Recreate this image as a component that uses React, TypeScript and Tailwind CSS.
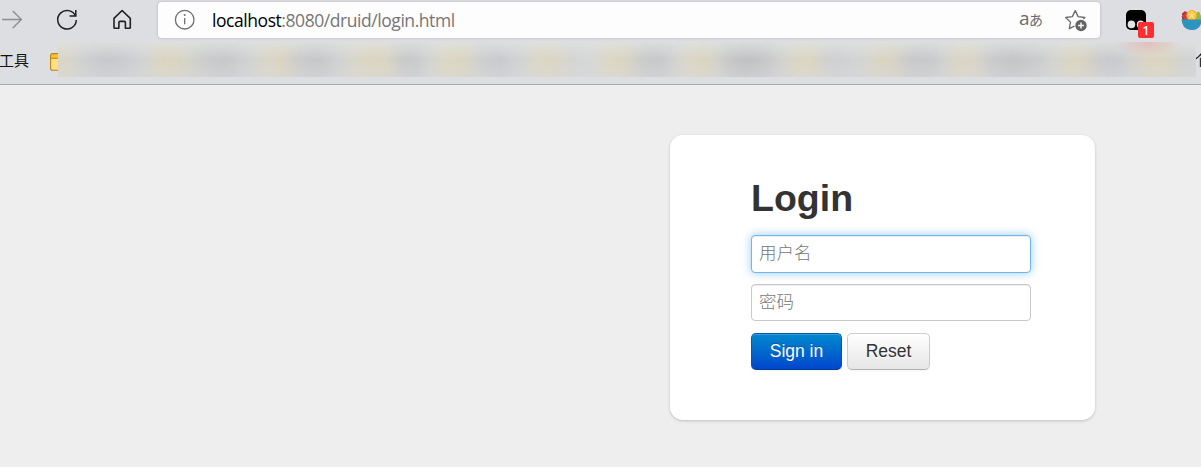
import React from "react";

const bookmarkBlurStops: [number, string][] = [
  [58, "#dad5c4"], [66, "#dad6c8"], [84, "#cfd0d1"], [104, "#c6c8cb"], [122, "#c9cbcf"], [142, "#d1d2d4"],
  [158, "#dad6c4"], [171, "#dbd5be"], [186, "#d6d4c8"], [204, "#cbcccd"], [226, "#c5c7c9"], [246, "#cfd1d3"],
  [262, "#d8d6cc"], [280, "#dbd5be"], [296, "#cdcdca"], [318, "#c4c6c9"], [340, "#d1d2d3"], [356, "#dad7c9"],
  [373, "#dbd5be"], [388, "#dad5c4"], [398, "#cbccc9"], [412, "#c6c8ca"], [430, "#d3d4d2"], [444, "#dcd8c4"],
  [456, "#dcd6be"], [468, "#d8d5c5"], [482, "#cdced0"], [500, "#c8cace"], [518, "#d0d2d4"], [534, "#dad7c9"],
  [548, "#dcd6c0"], [562, "#d8d6ca"], [576, "#d3d4d5"], [592, "#d6d7d7"], [606, "#dbd7c8"], [618, "#dcd6c0"],
  [630, "#d6d3c5"], [642, "#cacbcb"], [658, "#c5c7c9"], [674, "#d1d2d2"], [688, "#dbd7c8"], [702, "#dbd5be"],
  [714, "#d6d4c8"], [728, "#c7c8c8"], [746, "#bfc0c2"], [766, "#c6c7c9"], [782, "#d2d2d0"], [798, "#dcd6c2"],
  [812, "#dbd6c2"], [826, "#d0d1d0"], [842, "#ced0d2"], [858, "#d2d3d5"], [872, "#d9d6c9"], [886, "#dad4bf"],
  [898, "#d3d1c7"], [914, "#c6c8ca"], [932, "#c7c9cc"], [944, "#d2d2cf"], [962, "#dcd6c2"], [978, "#d6d4c8"],
  [992, "#c9cacd"], [1014, "#c2c4c6"], [1036, "#c9cbcd"], [1056, "#d5d4cf"], [1070, "#dad5c1"], [1082, "#dad5c1"],
  [1098, "#cbccca"], [1114, "#c7c9ce"], [1128, "#cfd0d1"], [1144, "#dad4c4"], [1158, "#dcd5bd"], [1172, "#d8d4c5"],
  [1184, "#d0d2d1"], [1196, "#d1d4d5"],
];

const bookmarkGradient = `linear-gradient(90deg, ${bookmarkBlurStops
  .map(([x, color]) => `${color} ${x - 38}px`)
  .join(", ")})`;

function Toolbar() {
  return (
    <div className="flex h-[39px] items-start">
      <svg className="mt-[10px] h-5 w-6 shrink-0" viewBox="0 0 24 20" fill="none" stroke="#8d8e91" strokeWidth="1.4">
        <path d="M2 9.5h19.3M12.8 1l8.6 8.5-8.6 8.5" />
      </svg>
      <svg className="mt-[8px] ml-[31px] h-6 w-6 shrink-0" viewBox="0 0 24 24" fill="none" stroke="#202124" strokeWidth="1.5">
        <path d="M20.6 8.2A9.3 9.3 0 1 0 21.3 12M20.8 2v6h-6.2" />
      </svg>
      <svg className="mt-[8px] ml-[31px] h-6 w-6 shrink-0" viewBox="0 0 24 24" fill="none" stroke="#202124" strokeWidth="1.6" strokeLinejoin="round">
        <path d="M4 10.4 12.1 2.5l8.2 7.9v9.2q0 .7-.7.7h-4.2v-5.8q0-1.1-1.1-1.1H10q-1.1 0-1.1 1.1v5.8H4.7q-.7 0-.7-.7z" />
      </svg>
      <div className="mt-[2px] ml-[24px] flex h-[36px] w-[942px] shrink-0 items-center rounded-[4px] bg-[#fdfdfd] shadow-[0_0_2px_1px_#c8c9cc]">
        <svg className="ml-[16px] h-[22px] w-[22px]" viewBox="0 0 22 22" fill="none" stroke="#6f6f70" strokeWidth="1.3">
          <circle cx="10.7" cy="10.7" r="9.3" />
          <path d="M10.7 9v6.3" />
          <circle cx="10.7" cy="6.1" r="1" fill="#6f6f70" stroke="none" />
        </svg>
        <div className="ml-[16px] w-[300px] pb-px whitespace-nowrap font-['Open_Sans','Noto_Sans',sans-serif] text-[17.5px] leading-[24px] tracking-[-0.44px] text-[#767676]">
          <span className="text-black">localhost</span>:8080/druid/login.html
        </div>
        <div className="ml-auto flex w-[25px] items-baseline pb-[2px] font-['Open_Sans','Noto_Sans_CJK_JP',sans-serif] leading-[22px] text-[#6c6c6c]">
          <span className="text-[19px] tracking-[-0.5px]">a</span>
          <span className="text-[14px]">あ</span>
        </div>
        <svg className="mr-[12px] ml-[20px] h-6 w-6" viewBox="0 0 24 24" fill="none" stroke="#6b6b6b" strokeWidth="1.3" strokeLinejoin="round">
          <path d="m11.3 2.6 2.9 6 6.7.9-4.8 4.6 1.1 6.6-5.9-3.1-6 3.1 1.2-6.6-4.9-4.6 6.7-.9z" />
          <circle cx="17" cy="17.5" r="6.7" fill="#fdfdfd" stroke="none" />
          <circle cx="17" cy="17.5" r="5.7" fill="#646464" stroke="none" />
          <path d="M17 14.6v5.8M14.1 17.5h5.8" stroke="#fff" strokeWidth="1.4" />
        </svg>
      </div>
      <div className="relative mt-[10px] ml-[26px] h-[20px] w-[20px] shrink-0">
        <svg className="h-5 w-5" viewBox="0 0 20 20">
          <rect width="20" height="20" rx="5" />
          <circle cx="5.4" cy="14.4" r="3.8" fill="#e3e4e7" />
          <circle cx="14.6" cy="14.4" r="3.8" fill="#e3e4e7" />
        </svg>
        <div className="absolute top-[12px] left-[12px] z-10 flex h-[16px] w-[16px] items-center justify-center rounded-[2px] bg-[#fb2f32] font-['Noto_Sans',sans-serif] text-[13px] font-medium leading-none text-white">1</div>
      </div>
      <svg className="mt-[9px] ml-[35px] h-[22px] w-[20px] shrink-0" viewBox="0 0 20 22">
        <path d="M1.2 4.2 4 2l5 3v6.5H1.2z" fill="#c83e46" />
        <path d="M1 5.5 4.5 3.6M.9 7.5 3 11" stroke="#8e2a38" strokeWidth="1" />
        <path d="m13 11 2-7 3-1.5 2 4.5v4z" fill="#7fbf4b" />
        <circle cx="10.8" cy="6.6" r="5.5" fill="#f6a51e" />
        <circle cx="10.8" cy="6.4" r="4.3" fill="#fdc63a" />
        <path d="m10.8 2.2v4.2L7.2 4.6m3.6 1.8 3.8-1.9M10.8 6.4l-2.8 4M10.8 6.4l2.8 4" fill="none" stroke="#fff0bc" strokeWidth=".8" />
        <path d="M.5 10.5H20v4.2C18.5 19 15 21 10.5 21 4.9 21 1.3 17.5.5 10.5z" fill="#2c94bd" />
      </svg>
    </div>
  );
}

function BookmarkBar() {
  return (
    <div className="flex h-[45px] pt-[3px]">
      <div className="w-[50px] shrink-0 pt-[8px] font-['Noto_Sans_CJK_SC',sans-serif] text-[15px] leading-[20px] whitespace-nowrap text-[#111]">
        <span className="-ml-px">工具</span>
      </div>
      <svg className="mt-[11px] h-[18px] w-[8px] shrink-0" viewBox="0 0 8 18">
        <path d="M8 .6H2.5Q.6.6.6 2.5v12.8q0 2 1.9 2H8z" fill="#ffdf82" />
        <path d="M8 .8H2.5Q.7.8.7 2.6v2.6H8z" fill="#fbc52b" />
        <path d="M8 .6H2.5Q.6.6.6 2.5v12.8q0 2 1.9 2H8M.6 5.3H8" fill="none" stroke="#b98518" strokeWidth="1.1" />
      </svg>
      <div className="relative h-[35px] w-[1138px] shrink-0 overflow-hidden">
        <div className="absolute -inset-x-5 -inset-y-5 blur-[5px]" style={{ background: bookmarkGradient }} />
        <div className="absolute inset-0 bg-linear-to-b from-[#e0e2e2cc] via-[#ffffff00] to-[#dadadb77]" />
        <div className="absolute top-[-12px] left-[1056px] h-[26px] w-[68px] bg-[radial-gradient(closest-side,#e2a5a588,#e2a5a500)]" />
      </div>
      <div className="w-[5px] overflow-hidden pt-[8px] font-['Noto_Sans_CJK_SC',sans-serif] text-[15px] leading-[20px] text-[#111]">
        <span className="-ml-[3px]">个</span>
      </div>
    </div>
  );
}

function LoginCard() {
  return (
    <form className="ml-[670px] h-[285px] w-[425px] rounded-[13px] bg-white pt-[41px] pl-[81px] font-['Liberation_Sans','Noto_Sans_CJK_SC',sans-serif] text-[17.5px] text-[#333] shadow-[0_1px_3px_#0003]" onSubmit={(event) => event.preventDefault()}>
      <h2 className="h-[59px] text-[37.5px] leading-[44px] font-bold">Login</h2>
      <input className="block h-[38px] w-[280px] rounded-[4px] border border-[#70b5ec] bg-white px-[7px] pb-px shadow-[inset_0_1px_1px_#00000013,0_0_10px_#52a8ec99] outline-none placeholder:font-light placeholder:text-[#777]" type="text" placeholder="用户名" />
      <input className="mt-[11px] block h-[37px] w-[280px] rounded-[4px] border border-[#c8c8c8] bg-white px-[7px] pb-px shadow-[inset_0_1px_1px_#00000013] outline-none placeholder:font-light placeholder:text-[#777]" type="password" placeholder="密码" />
      <div className="mt-[12px] flex gap-[5px]">
        <button className="h-[37px] w-[91px] rounded-[5px] border border-[#0059ad] border-b-[#003f91] bg-linear-to-b from-[#0088cc] to-[#0044cc] pb-px text-white shadow-[inset_0_1px_0_#ffffff33,0_1px_2px_#0000000d] [text-shadow:0_-1px_0_#00000040]" type="submit">Sign in</button>
        <button className="h-[37px] w-[83px] rounded-[5px] border border-[#ccc] border-b-[#b3b3b3] bg-linear-to-b from-white to-[#e6e6e6] pb-px shadow-[inset_0_1px_0_#ffffff33,0_1px_2px_#0000000d] [text-shadow:0_1px_1px_#ffffffbf]" type="reset">Reset</button>
      </div>
    </form>
  );
}

export default function App() {
  return (
    <div className="h-[467px] w-[1201px] overflow-hidden bg-[#eeeeee]">
      <header className="h-[85px] border-b border-[#a9abaf] bg-[#dddee2]">
        <Toolbar />
        <BookmarkBar />
      </header>
      <main className="pt-[50px]">
        <LoginCard />
      </main>
    </div>
  );
}
